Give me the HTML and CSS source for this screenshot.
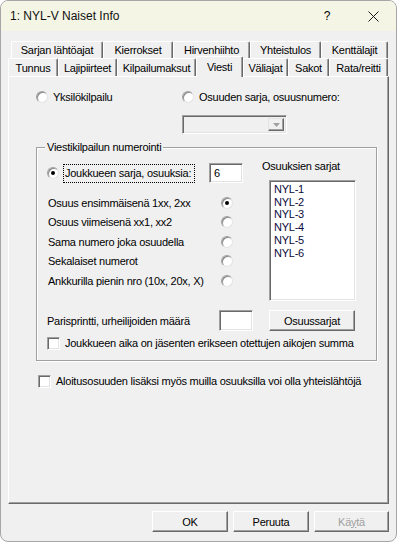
FILE: index.html
```html
<!DOCTYPE html>
<html lang="fi">
  <head>
    <meta charset="UTF-8" />
    <meta name="viewport" content="width=device-width, initial-scale=1.0" />
    <title>1: NYL-V Naiset Info</title>
    <link rel="stylesheet" href="styles.css">
  </head>
  <body>
    <div class="window">
      <div class="titlebar">
        <span class="title">1: NYL-V Naiset Info</span>
        <span class="capbtn help">?</span>
        <span class="capbtn close">
          <svg width="11" height="11" viewBox="0 0 11 11"><path d="M0.5 0.5L10.5 10.5M10.5 0.5L0.5 10.5" stroke="#1a1a1a" stroke-width="1" fill="none" /></svg>
        </span>
      </div>

      <div class="client">
        <div class="tabs">
          <div class="tabrow back">
            <div class="tab" style="width: 92px">Sarjan lähtöajat</div>
            <div class="tab" style="width: 70px">Kierrokset</div>
            <div class="tab" style="width: 77px">Hirvenhiihto</div>
            <div class="tab" style="width: 71px">Yhteistulos</div>
            <div class="tab" style="width: 67px">Kenttälajit</div>
          </div>
          <div class="tabrow front">
            <div class="tab" style="width: 50px">Tunnus</div>
            <div class="tab" style="width: 59px">Lajipiirteet</div>
            <div class="tab" style="width: 79px">Kilpailumaksut</div>
            <div class="tab sel" style="width: 47px">Viesti</div>
            <div class="tab" style="width: 45px">Väliajat</div>
            <div class="tab" style="width: 41px">Sakot</div>
            <div class="tab" style="width: 59px">Rata/reitti</div>
          </div>
        </div>

        <div class="panel">
          <div class="mode-row">
            <label class="opt first"><span class="radio"></span>Yksilökilpailu</label>
            <label class="opt"><span class="radio"></span>Osuuden sarja, osuusnumero:</label>
          </div>
          <div class="combo">
            <span class="combo-btn">
              <svg width="7" height="4" viewBox="0 0 7 4"><path d="M0 0H7L3.5 4Z" fill="#a0a0a0" /></svg>
            </span>
          </div>

          <div class="group">
            <div class="group-label">Viestikilpailun numerointi</div>
            <div class="group-body">
              <div class="left">
                <div class="team-row">
                  <span class="radio on"></span>
                  <span class="focus">Joukkueen sarja, osuuksia:</span>
                  <span class="edit">6</span>
                </div>
                <div class="numbering">
                  <div class="num-row"><span class="num-text">Osuus ensimmäisenä 1xx, 2xx</span><span class="radio on"></span></div>
                  <div class="num-row"><span class="num-text">Osuus viimeisenä xx1, xx2</span><span class="radio"></span></div>
                  <div class="num-row"><span class="num-text">Sama numero joka osuudella</span><span class="radio"></span></div>
                  <div class="num-row"><span class="num-text">Sekalaiset numerot</span><span class="radio"></span></div>
                  <div class="num-row"><span class="num-text">Ankkurilla pienin nro (10x, 20x, X)</span><span class="radio"></span></div>
                </div>
              </div>
              <div class="right">
                <div class="list-label">Osuuksien sarjat</div>
                <div class="listbox">
                  <div>NYL-1</div>
                  <div>NYL-2</div>
                  <div>NYL-3</div>
                  <div>NYL-4</div>
                  <div>NYL-5</div>
                  <div>NYL-6</div>
                </div>
              </div>
              <div class="pair-row">
                <span class="pair-text">Parisprintti, urheilijoiden määrä</span>
                <span class="edit pair"></span>
              </div>
              <div class="right-btn"><span class="btn wide">Osuussarjat</span></div>
              <div class="check-row inner"><span class="check"></span>Joukkueen aika on jäsenten erikseen otettujen aikojen summa</div>
            </div>
          </div>

          <div class="check-row outer"><span class="check"></span>Aloitusosuuden lisäksi myös muilla osuuksilla voi olla yhteislähtöjä</div>
        </div>

        <div class="buttons">
          <span class="btn dlg">OK</span>
          <span class="btn dlg">Peruuta</span>
          <span class="btn dlg off">Kä<u>y</u>tä</span>
        </div>
      </div>
    </div>
  </body>
</html>
```

FILE: styles.css
```css
* {
  box-sizing: border-box;
}
body {
  margin: 0;
  background: #ffffff;
  font-family: "Liberation Sans", Arial, sans-serif;
  font-size: 11px;
  letter-spacing: -0.25px;
  color: #000;
}
.window {
  width: 397px;
  height: 542px;
  border: 1px solid #a6a6a6;
  border-radius: 8px;
  background: #f0f0f0;
  overflow: hidden;
  display: flex;
  flex-direction: column;
}

/* title bar */
.titlebar {
  height: 30px;
  flex: none;
  display: flex;
  align-items: center;
  padding-left: 9px;
  background: #f4f5e4;
}
.title {
  font-size: 12px;
  letter-spacing: 0;
  color: #111;
}
.capbtn {
  width: 46px;
  height: 30px;
  display: flex;
  align-items: center;
  justify-content: center;
  font-size: 12px;
  letter-spacing: 0;
}
.help {
  margin-left: auto;
}

/* client */
.client {
  flex: 1;
  padding: 10px 7px 0 7px;
}
.tabrow {
  display: flex;
}
.tabrow.back {
  height: 17px;
  margin-left: 3px;
}
.tabrow.front {
  height: 18px;
}
.tab {
  flex: none;
  display: flex;
  align-items: center;
  justify-content: center;
  white-space: nowrap;
  background: #f0f0f0;
  border-top: 1px solid #fff;
  border-left: 1px solid #fff;
  border-right: 1px solid #696969;
  border-radius: 2px 2px 0 0;
  box-shadow: inset -1px 0 #a0a0a0;
}
.tab.sel {
  margin-top: -2px;
  margin-bottom: -1px;
  position: relative;
  z-index: 1;
}

.panel {
  width: 381px;
  height: 428px;
  border-top: 1px solid #fff;
  border-left: 1px solid #fff;
  border-right: 1px solid #696969;
  border-bottom: 1px solid #696969;
  box-shadow: inset -1px -1px #a0a0a0;
}

/* controls */
.radio {
  flex: none;
  width: 12px;
  height: 12px;
  border-radius: 50%;
  background: #fff;
  border: 1px solid;
  border-color: #a0a0a0 #e3e3e3 #e3e3e3 #a0a0a0;
  box-shadow: inset 1px 1px #8a8a8a;
  display: flex;
  align-items: center;
  justify-content: center;
}
.radio.on::after {
  content: "";
  width: 4px;
  height: 4px;
  border-radius: 50%;
  background: #000;
}
.check {
  flex: none;
  width: 13px;
  height: 13px;
  background: #fff;
  border: 1px solid;
  border-color: #a0a0a0 #fff #fff #a0a0a0;
  box-shadow: inset 1px 1px #696969, inset -1px -1px #e3e3e3;
}
.edit {
  flex: none;
  background: #fff;
  border: 1px solid;
  border-color: #a0a0a0 #fff #fff #a0a0a0;
  box-shadow: inset 1px 1px #696969, inset -1px -1px #e3e3e3;
}
.btn {
  display: flex;
  align-items: center;
  justify-content: center;
  height: 21px;
  background: #f0f0f0;
  border: 1px solid;
  border-color: #fff #696969 #696969 #fff;
  box-shadow: inset -1px -1px #a0a0a0;
}

.mode-row {
  display: flex;
  align-items: center;
  height: 16px;
  margin-top: 12px;
  padding-left: 27px;
}
.opt {
  display: flex;
  align-items: center;
  gap: 5px;
}
.opt.first {
  width: 146px;
}
.combo {
  width: 105px;
  height: 19px;
  margin: 10px 0 0 173px;
  display: flex;
  justify-content: flex-end;
  padding: 2px;
  border: 1px solid;
  border-color: #a0a0a0 #fff #fff #a0a0a0;
  box-shadow: inset 1px 1px #696969, inset -1px -1px #e3e3e3;
}
.combo-btn {
  width: 16px;
  height: 13px;
  display: flex;
  align-items: center;
  justify-content: center;
  border: 1px solid;
  border-color: #e3e3e3 #696969 #696969 #e3e3e3;
  box-shadow: inset -1px -1px #a0a0a0;
}

/* group box */
.group {
  width: 341px;
  height: 214px;
  margin: 13px 0 0 27px;
  border: 1px solid #a0a0a0;
  box-shadow: 1px 1px 0 #fff, inset 1px 1px 0 #fff;
}
.group-label {
  width: fit-content;
  margin: -7px 0 0 8px;
  padding: 0 2px;
  line-height: 13px;
  background: #f0f0f0;
}
.group-body {
  display: grid;
  grid-template-columns: 225px 1fr;
}
.left {
  padding-top: 9px;
}
.team-row {
  display: flex;
  align-items: center;
  height: 20px;
  padding-left: 10px;
}
.focus {
  width: 132px;
  height: 19px;
  margin-left: 4px;
  padding-left: 1px;
  display: flex;
  align-items: center;
  border: 1px dotted #000;
}
.team-row .edit {
  width: 34px;
  height: 20px;
  margin-left: 14px;
  padding: 3px 0 0 4px;
}
.numbering {
  margin-top: 10px;
}
.num-row {
  display: flex;
  align-items: center;
  height: 19.5px;
  padding-left: 11px;
}
.num-text {
  width: 173px;
}
.right {
  padding-top: 6px;
}
.list-label {
  line-height: 13px;
}
.listbox {
  width: 87px;
  height: 121px;
  margin: 7px 0 0 7px;
  padding: 2px 0 0 4px;
  line-height: 12.7px;
  color: #0a0a3c;
  background: #fff;
  border: 1px solid;
  border-color: #a0a0a0 #fff #fff #a0a0a0;
  box-shadow: inset 1px 1px #696969, inset -1px -1px #e3e3e3;
}
.pair-row {
  display: flex;
  align-items: center;
  height: 21px;
  margin-top: 9px;
  padding-left: 10px;
}
.pair-text {
  width: 172px;
}
.edit.pair {
  width: 34px;
  height: 21px;
}
.right-btn {
  margin-top: 9px;
  padding-left: 7px;
}
.btn.wide {
  width: 86px;
}
.check-row {
  display: flex;
  align-items: center;
  gap: 5px;
  height: 16px;
}
.check-row.inner {
  grid-column: 1 / -1;
  margin-top: 4px;
  padding-left: 10px;
}
.check-row.outer {
  margin-top: 12px;
  padding-left: 29px;
}

/* dialog buttons */
.buttons {
  display: flex;
  justify-content: flex-end;
  gap: 5px;
  margin-top: 7px;
  padding-right: 0;
}
.btn.dlg {
  width: 76px;
}
.btn.off {
  width: 75px;
  color: #a0a0a0;
}
```
